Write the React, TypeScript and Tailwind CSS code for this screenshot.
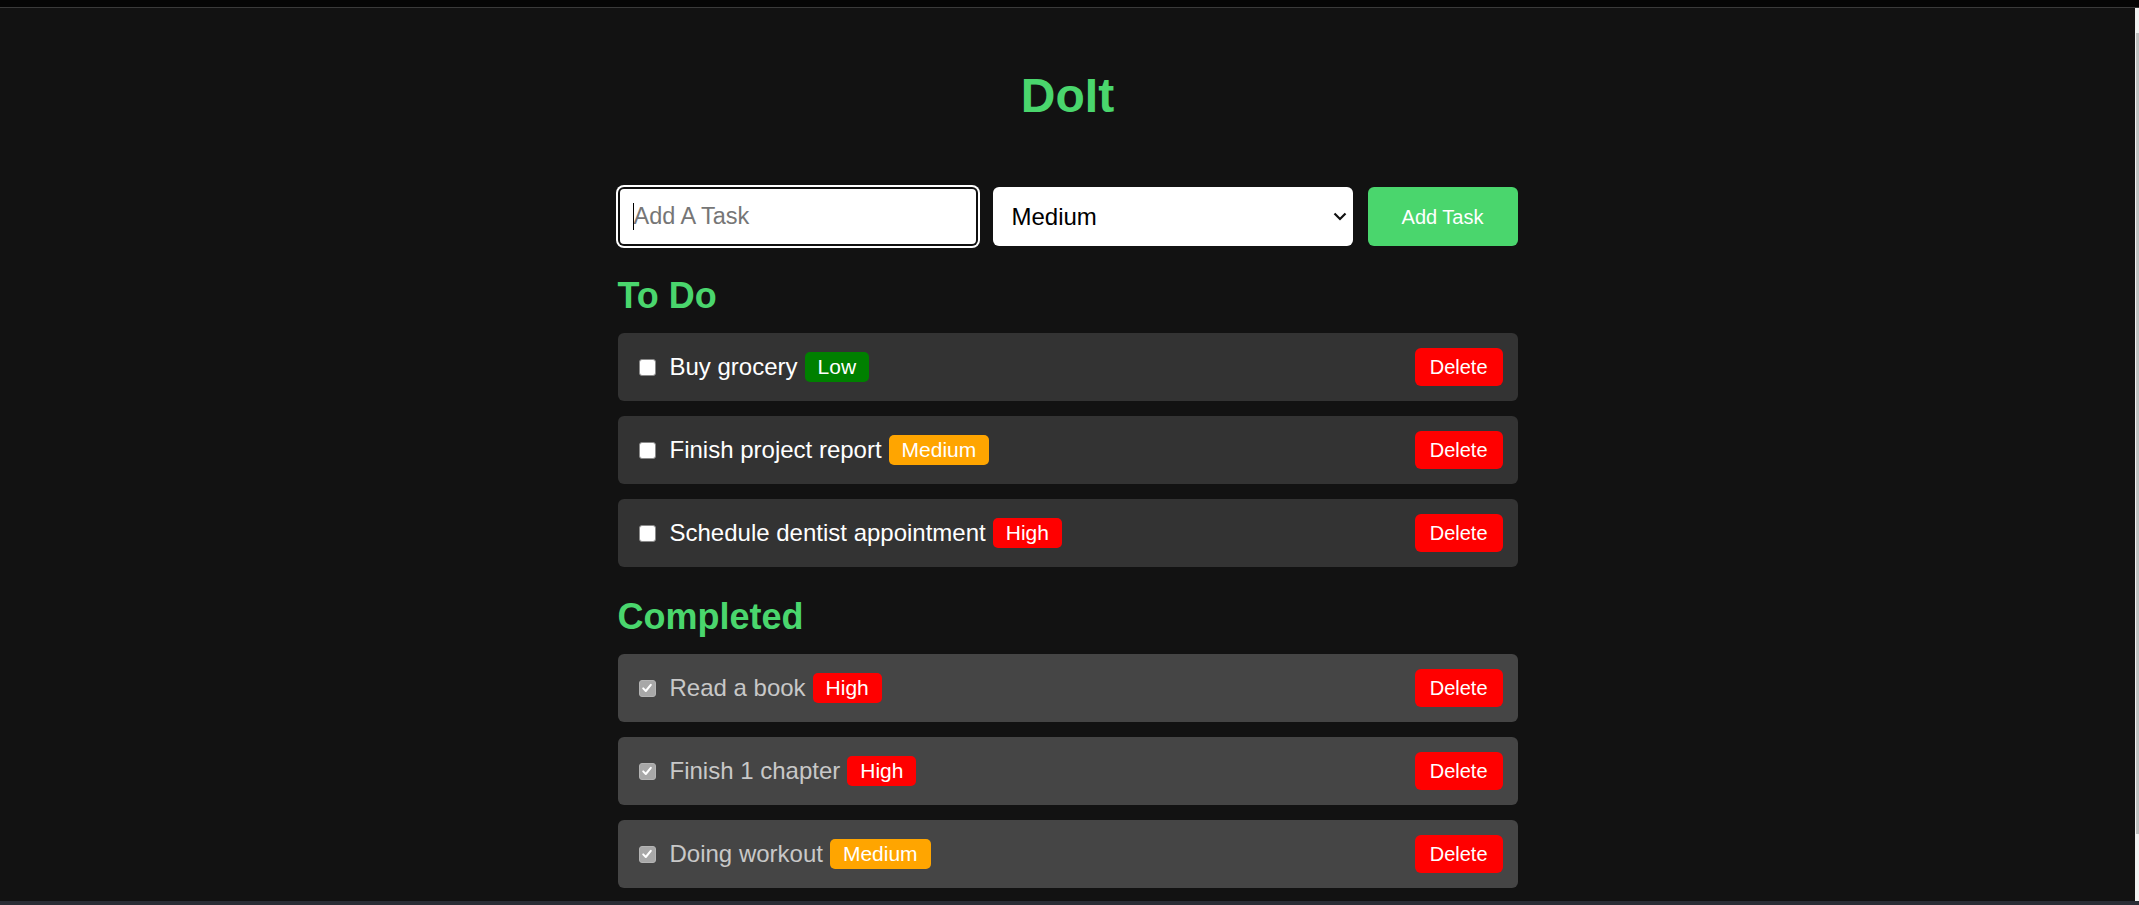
import React, { useState } from 'react';

type Priority = 'Low' | 'Medium' | 'High';

interface Task {
  id: number;
  text: string;
  priority: Priority;
  done: boolean;
}

const initialTasks: Task[] = [
  { id: 1, text: 'Buy grocery', priority: 'Low', done: false },
  { id: 2, text: 'Finish project report', priority: 'Medium', done: false },
  { id: 3, text: 'Schedule dentist appointment', priority: 'High', done: false },
  { id: 4, text: 'Read a book', priority: 'High', done: true },
  { id: 5, text: 'Finish 1 chapter', priority: 'High', done: true },
  { id: 6, text: 'Doing workout', priority: 'Medium', done: true },
];

const badgeColor: Record<Priority, string> = {
  Low: 'bg-[#008000]',
  Medium: 'bg-[#ffa500]',
  High: 'bg-[#ff0000]',
};

const CheckBox = ({ checked, onClick }: { checked: boolean; onClick: () => void }) => (
  <button
    onClick={onClick}
    className={`ml-[6px] mr-[14px] w-[17px] h-[17px] shrink-0 rounded-[3px] flex items-center justify-center ${
      checked ? 'bg-[#a8a8a8] border border-[#b4b4b4]' : 'bg-white border border-[#8a8a8a]'
    }`}
  >
    {checked && (
      <svg width="12" height="12" viewBox="0 0 12 12" fill="none">
        <path d="M2.2 6.4 L4.8 9 L9.8 2.8" stroke="white" strokeWidth="2" strokeLinecap="round" strokeLinejoin="round" />
      </svg>
    )}
  </button>
);

const TaskRow = ({
  task,
  onToggle,
  onDelete,
}: {
  task: Task;
  onToggle: () => void;
  onDelete: () => void;
}) => (
  <div
    className={`h-[68px] px-[15px] rounded-[6px] flex items-center justify-between ${
      task.done ? 'bg-[#454545]' : 'bg-[#333333]'
    }`}
  >
    <div className="flex items-center">
      <CheckBox checked={task.done} onClick={onToggle} />
      <span className={`text-[24px] leading-[28px] ${task.done ? 'text-[#c8c8c8]' : 'text-white'}`}>
        {task.text}
      </span>
      <span
        className={`ml-[7px] px-[13px] py-[3px] rounded-[5px] text-[21px] leading-[24px] text-white ${badgeColor[task.priority]}`}
      >
        {task.priority}
      </span>
    </div>
    <button
      onClick={onDelete}
      className="h-[38px] px-[15px] rounded-[6px] bg-[#ff0000] text-white text-[20px] leading-[23px]"
    >
      Delete
    </button>
  </div>
);

export default function App() {
  const [tasks, setTasks] = useState<Task[]>(initialTasks);
  const [text, setText] = useState('');
  const [priority, setPriority] = useState<Priority>('Medium');

  const addTask = () => {
    if (!text.trim()) return;
    setTasks(prev => [...prev, { id: Date.now(), text: text.trim(), priority, done: false }]);
    setText('');
  };

  const toggle = (id: number) =>
    setTasks(prev => prev.map(t => (t.id === id ? { ...t, done: !t.done } : t)));

  const remove = (id: number) => setTasks(prev => prev.filter(t => t.id !== id));

  const todo = tasks.filter(t => !t.done);
  const completed = tasks.filter(t => t.done);

  return (
    <div
      className="h-[905px] overflow-hidden flex flex-col bg-[#121212]"
      style={{ fontFamily: '"Liberation Sans", Arial, sans-serif' }}
    >
      {/* window chrome strip */}
      <div className="h-[7px] bg-[#050505] shrink-0" />
      <div className="h-[1px] bg-[#3a3a3a] shrink-0" />

      <div className="flex-1 flex min-h-0">
        <main className="flex-1 overflow-hidden">
          <div className="w-[900px] mx-auto pt-[60px]">
            <h1 className="text-center text-[48px] leading-[55px] font-bold text-[#4ad66d] mb-[64px]">
              DoIt
            </h1>

            {/* Add task row */}
            <div className="flex gap-[15px] h-[59px]">
              <div className="relative flex-1 min-w-0 flex">
                <input
                  autoFocus
                  value={text}
                  onChange={e => setText(e.target.value)}
                  onKeyDown={e => e.key === 'Enter' && addTask()}
                  placeholder="Add A Task"
                  className="flex-1 min-w-0 rounded-[6px] bg-white pl-[16px] text-[23.5px] text-black placeholder:text-[#767676] caret-black outline-none shadow-[inset_0_0_0_2px_#101010,0_0_0_2px_#ffffff]"
                />
                {!text && (
                  <span className="absolute left-[15px] top-[16px] w-[1px] h-[27px] bg-black pointer-events-none" />
                )}
              </div>
              <div className="relative w-[360px]">
                <select
                  value={priority}
                  onChange={e => setPriority(e.target.value as Priority)}
                  className="appearance-none w-full h-full rounded-[6px] bg-white pl-[19px] text-[24px] text-black outline-none"
                >
                  <option>Low</option>
                  <option>Medium</option>
                  <option>High</option>
                </select>
                <svg
                  className="absolute right-[6px] top-[25px] pointer-events-none"
                  width="14"
                  height="9"
                  viewBox="0 0 14 9"
                  fill="none"
                >
                  <path d="M1.5 1.5 L7 7 L12.5 1.5" stroke="#111" strokeWidth="2.2" />
                </svg>
              </div>
              <button
                onClick={addTask}
                className="w-[150px] rounded-[6px] bg-[#4ad66d] text-white text-[20px]"
              >
                Add Task
              </button>
            </div>

            <h2 className="mt-[30px] mb-[17px] text-[36px] leading-[40px] font-bold text-[#4ad66d]">To Do</h2>
            <div className="flex flex-col gap-[15px]">
              {todo.map(t => (
                <TaskRow key={t.id} task={t} onToggle={() => toggle(t.id)} onDelete={() => remove(t.id)} />
              ))}
            </div>

            <h2 className="mt-[30px] mb-[17px] text-[36px] leading-[40px] font-bold text-[#4ad66d]">Completed</h2>
            <div className="flex flex-col gap-[15px]">
              {completed.map(t => (
                <TaskRow key={t.id} task={t} onToggle={() => toggle(t.id)} onDelete={() => remove(t.id)} />
              ))}
            </div>
          </div>
        </main>

        {/* scrollbar */}
        <div className="w-[4px] bg-[#f1f1f1] pt-[25px] shrink-0">
          <div className="ml-[1px] h-[801px] bg-[#c1c1c1]" />
        </div>
      </div>

      <div className="h-[4px] bg-[#2a2d35] shrink-0" />
    </div>
  );
}
